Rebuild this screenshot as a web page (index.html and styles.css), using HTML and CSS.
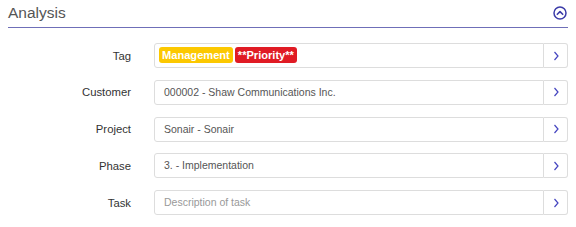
FILE: index.html
```html
<!DOCTYPE html>
<html>
<head>
<meta charset="utf-8">
<link rel="stylesheet" href="styles.css">
</head>
<body>
<div class="panel">
  <div class="header">
    <h2 class="title">Analysis</h2>
    <svg class="collapse" width="14" height="14" viewBox="0 0 14 14">
      <circle cx="7" cy="7" r="6" fill="none" stroke="#3b3ba8" stroke-width="1.5"/>
      <path d="M4.3 8.3 L7 5.6 L9.7 8.3" fill="none" stroke="#3b3ba8" stroke-width="1.6" stroke-linecap="round" stroke-linejoin="round"/>
    </svg>
  </div>
  <div class="form">
    <label class="label">Tag</label>
    <div class="field">
      <div class="input tags">
        <span class="badge yellow">Management</span>
        <span class="badge red">**Priority**</span>
      </div>
      <button class="btn"><svg width="8" height="10" viewBox="0 0 8 10"><path d="M2.5 1 L6 5 L2.5 9" fill="none" stroke="#4545c0" stroke-width="1.2"/></svg></button>
    </div>

    <label class="label">Customer</label>
    <div class="field">
      <div class="input">000002 - Shaw Communications Inc.</div>
      <button class="btn"><svg width="8" height="10" viewBox="0 0 8 10"><path d="M2.5 1 L6 5 L2.5 9" fill="none" stroke="#4545c0" stroke-width="1.2"/></svg></button>
    </div>

    <label class="label">Project</label>
    <div class="field">
      <div class="input">Sonair - Sonair</div>
      <button class="btn"><svg width="8" height="10" viewBox="0 0 8 10"><path d="M2.5 1 L6 5 L2.5 9" fill="none" stroke="#4545c0" stroke-width="1.2"/></svg></button>
    </div>

    <label class="label">Phase</label>
    <div class="field">
      <div class="input">3. - Implementation</div>
      <button class="btn"><svg width="8" height="10" viewBox="0 0 8 10"><path d="M2.5 1 L6 5 L2.5 9" fill="none" stroke="#4545c0" stroke-width="1.2"/></svg></button>
    </div>

    <label class="label">Task</label>
    <div class="field">
      <div class="input placeholder">Description of task</div>
      <button class="btn"><svg width="8" height="10" viewBox="0 0 8 10"><path d="M2.5 1 L6 5 L2.5 9" fill="none" stroke="#4545c0" stroke-width="1.2"/></svg></button>
    </div>
  </div>
</div>
</body>
</html>
```
FILE: styles.css
```css
html, body {
  margin: 0;
  padding: 0;
  background: #fff;
}
body {
  font-family: "Liberation Sans", Arial, sans-serif;
}
.panel {
  padding: 0 8px;
}
.header {
  display: flex;
  align-items: center;
  justify-content: space-between;
  padding: 3px 1px 4px 0;
  border-bottom: 1px solid #6f6fb8;
}
.title {
  margin: 0;
  font-size: 15.5px;
  font-weight: normal;
  line-height: 20px;
  color: #555;
}
.collapse {
  display: block;
}
.form {
  display: grid;
  grid-template-columns: 123px 1fr;
  column-gap: 23px;
  row-gap: 11.75px;
  margin-top: 15px;
  align-items: center;
}
.label {
  text-align: right;
  font-size: 11.3px;
  color: #333;
}
.field {
  display: flex;
  height: 25px;
}
.input {
  flex: 1;
  box-sizing: border-box;
  height: 25px;
  border: 1px solid #ddd;
  border-radius: 3px 0 0 3px;
  padding: 0 9px;
  font-size: 10.5px;
  line-height: 23px;
  color: #555;
  white-space: nowrap;
  overflow: hidden;
}
.input.tags {
  padding: 3px 4px;
  display: flex;
  gap: 2px;
  align-items: flex-start;
}
.placeholder {
  color: #999;
}
.badge {
  display: inline-block;
  height: 16px;
  line-height: 16px;
  padding: 0 3px;
  border-radius: 3px;
  font-size: 11.1px;
  font-weight: bold;
  color: #fff;
}
.yellow {
  background: #fcc800;
}
.red {
  background: #e01b24;
}
.btn {
  box-sizing: border-box;
  width: 24px;
  height: 25px;
  border: 1px solid #ddd;
  border-left: none;
  border-radius: 0 3px 3px 0;
  background: #fff;
  padding: 0;
  display: flex;
  align-items: center;
  justify-content: center;
}
.btn svg {
  display: block;
}
```
